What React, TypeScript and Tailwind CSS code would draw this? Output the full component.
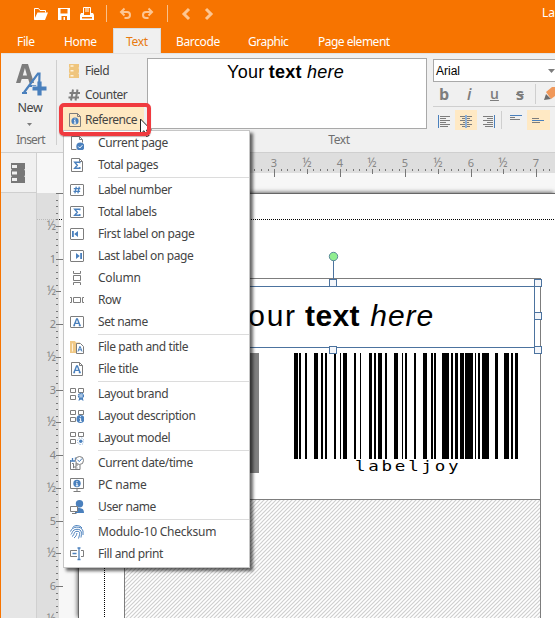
import { Fragment, ReactNode } from "react";

const GRAY = "#7d7d7d";
const BLUE = "#4a80bd";

interface MenuEntry {
    icon: string,
    label: string,
    wide?: boolean,
    last?: boolean
}

const menu: MenuEntry[] = [
    { icon: "currentPage", label: "Current page" },
    { icon: "totalPages", label: "Total pages", last: true },
    { icon: "labelNumber", label: "Label number" },
    { icon: "totalLabels", label: "Total labels" },
    { icon: "first", label: "First label on page" },
    { icon: "lastLabel", label: "Last label on page" },
    { icon: "column", label: "Column", wide: true },
    { icon: "row", label: "Row" },
    { icon: "setName", label: "Set name", last: true },
    { icon: "filePath", label: "File path and title" },
    { icon: "fileTitle", label: "File title", last: true },
    { icon: "brand", label: "Layout brand" },
    { icon: "description", label: "Layout description" },
    { icon: "model", label: "Layout model", last: true },
    { icon: "date", label: "Current date/time" },
    { icon: "pc", label: "PC name", wide: true },
    { icon: "user", label: "User name", last: true },
    { icon: "checksum", label: "Modulo-10 Checksum", wide: true },
    { icon: "fill", label: "Fill and print" },
];

// [x, width] of every bar, relative to the barcode
const bars = [
    [0, 4], [5, 2], [11, 2], [20, 4], [27, 2], [31, 2], [40, 2], [46, 1], [49, 4], [60, 2], [66, 1], [75, 3],
    [80, 2], [84, 4], [91, 2], [100, 4], [108, 1], [111, 2], [120, 2], [129, 4], [137, 2], [140, 2], [148, 7],
    [157, 2], [161, 3], [166, 4], [171, 8], [181, 1], [184, 2], [188, 7], [201, 3], [210, 5], [217, 2], [221, 3],
];

const sheet = <path d="M1.5 .5h8l3 3v10h-11zM9.5 .5v3h3" />;
const card = <rect x=".5" y="1.5" width="13" height="11" rx=".5" />;
const grid = <path d="M.5 1.5h5v4h-5zM8.5 1.5h5v4h-5zM.5 8.5h5v4h-5z" />;
const sigma = <path d="M9.8 5.3V4.2H4.7l2.6 3-2.6 3h5.1V9" stroke={BLUE} strokeWidth="1.4" />;
const letterA = <path d="M4 10.5 6.6 4h.8L10 10.5M5 8.4h4M3.3 10.5h1.8M8.8 10.5h2" stroke={BLUE} strokeWidth="1.4" />;

const icons: Record<string, ReactNode> = {
    currentPage: <>
        <path d="M6.5 13.5h-5V.5h8l3 3v3M9.5 .5v3h3" />
        <circle cx="10.3" cy="10.5" r="4" fill={BLUE} stroke="none" />
        <path d="m8.3 10.5 1.5 1.5 2.6-2.8" stroke="#fff" />
    </>,
    totalPages: <>{sheet}{sigma}</>,
    labelNumber: <>
        {card}
        <path d="M6.3 3.7 4.9 10.3M9.3 3.7 7.9 10.3M3.8 5.7h6.6M3.5 8.3h6.6" stroke={BLUE} strokeWidth="1.3" />
    </>,
    totalLabels: <>{card}{sigma}</>,
    first: <>{card}<path d="M2 4h1.8v6H2zM8 4v6L4.2 7z" fill={BLUE} stroke="none" /></>,
    lastLabel: <>{card}<path d="M10.2 4H12v6h-1.8zM6 4v6l3.8-3z" fill={BLUE} stroke="none" /></>,
    column: <path d="M3.5 0v2.5h7V0M3.5 4.5h7v5h-7zM3.5 14v-2.5h7V14" />,
    row: <path d="M0 4.5h1.5v5H0M3.5 4.5h7v5h-7zM14 4.5h-1.5v5H14" />,
    setName: <>{card}{letterA}</>,
    filePath: <>
        <path d="M0 1h5l1 1.5h4v2H6V13H0z" fill="#f0c987" stroke="none" />
        <path d="M2.5 3.5v8" stroke="#fdf0da" />
        <path d="M6.5 3.5h4l3 3v7h-7z" fill="#fff" />
        <path d="m8 11.5 1.8-5h.4l1.8 5M8.6 9.8h2.8" stroke={BLUE} />
    </>,
    fileTitle: <>{sheet}{letterA}</>,
    brand: <>
        {grid}
        <path d="m9.3 10-.8 4 2.5-1.5 2.5 1.5-.8-4z" fill={BLUE} stroke="none" />
        <circle cx="11" cy="8.8" r="2.5" stroke={BLUE} fill="#a9c4e2" strokeDasharray="1.4 .6" strokeWidth="1.4" />
    </>,
    description: <>
        {grid}
        <circle cx="10.5" cy="10" r="4" fill={BLUE} stroke="none" />
        <path d="M10.6 7.2v1M9.6 9.5h1v2.8M9.4 12.4h2.4" stroke="#fff" />
    </>,
    model: <>
        {grid}
        <circle cx="10.8" cy="10.2" r="3.3" stroke="#88add5" strokeDasharray="1.3 1.3" />
        <circle cx="10.8" cy="10.2" r="1.7" fill={BLUE} stroke="none" />
    </>,
    date: <>
        <path d="M.5 4v9.5H10V9" />
        <path d="M0 5h5M2.5 2v3.5M5.5 1.5v3" stroke={BLUE} strokeWidth="1.3" />
        <path d="M2 7.5h1.5v4.7M5 8h2v2H5v2h2.5" />
        <circle cx="9.5" cy="4.5" r="4" fill="#fff" />
        <path d="m7.5 4 2 1.5 2.5-3" stroke={BLUE} />
    </>,
    pc: <>
        <path d="M.5 .5h13v10H.5zM7 10.5v3M3.5 13.5h7" />
        <circle cx="7" cy="5.5" r="3.7" fill={BLUE} stroke="none" />
        <path d="M7 3v1M6.2 5.2H7v2.5M5.8 7.8h2.5" stroke="#fff" />
    </>,
    user: <>
        <circle cx="9.5" cy="3.7" r="3.7" fill={BLUE} stroke="none" />
        <path d="M5 9c1-1.5 3-1.5 4.500-1S14 8 14 13H5z" fill={BLUE} stroke="none" />
        <path d="M.5 6.5h7v5h-7zM2 13.5h4.5" fill="#fff" />
    </>,
    checksum: <g stroke={BLUE}>
        <path d="M2.5 2.5C5-.2 9.500-.2 12 3M.5 6.5C2 1 11.500.5 13 6v4M.8 9.5C2.5 9 1.5 4.5 7 4.3S11.500 9 11 12.5M2 11.5C5 10 3 6.5 7 6.3S9.500 10 8.500 13.500M4 13c2-1.500 2.500-3 3-5" />
    </g>,
    fill: <>
        <path d="M7 3.500H.5v6H7M11 3.5h2.5v6H11" />
        <path d="M2.5 6.5h4M7.5 1h3M7.5 12.5h3M9 1v11.5" stroke={BLUE} strokeWidth="1.3" />
    </>,
};

function MenuIcon({ name }: { name: string }) {
    return (
        <svg width="14" height="14" viewBox="0 0 14 14" fill="none" stroke={GRAY} className="shrink-0">
            {icons[name]}
        </svg>
    )
}

function ReferenceMenu() {
    return (
        <div className="absolute left-[63px] top-[130px] flex h-[438px] w-[187px] flex-col border border-[#c6c6c6] bg-white py-px shadow-[3px_3px_3px_rgba(0,0,0,0.6)]">
            {menu.map((entry) => (
                <Fragment key={entry.label}>
                    <div className="flex h-[22px] shrink-0 items-center gap-[14px] pl-[6px] text-[12px]">
                        <MenuIcon name={entry.icon} />
                        <span className={entry.wide ? "whitespace-nowrap tracking-[-0.23px]" : "whitespace-nowrap tracking-[-0.39px]"}>{entry.label}</span>
                    </div>
                    {entry.last && <div className="ml-[34px] h-[3px] shrink-0 py-px"><div className="h-px bg-[#dcdcdc]" /></div>}
                </Fragment>
            ))}
        </div>
    )
}

function TitleBar() {
    return (
        <div className="flex h-[28px] items-center overflow-hidden whitespace-nowrap text-white">
            <svg width="220" height="28" viewBox="1 0 220 28" fill="none" className="shrink-0">
                <path d="M34.5 19.5v-11h4l1.5 2h5.5v2" stroke="#fff" />
                <path d="M34 20 37.5 12.5H48L45 20z" fill="#fff" />
                <path d="M58 8h12v12H58zM60.5 9v4.5h7V9zM61.5 16v4h2v-3H65v3h2v-4z" fill="#fff" fillRule="evenodd" />
                <path d="M83.5 15V7.5h7V15" stroke="#fff" />
                <path d="M85 8h4v4h-4z" fill="#ffbd80" />
                <path d="M81 13h2v2h8v-2h2l1 2v5H80v-5zm1 4v1.5h10V17z" fill="#fff" fillRule="evenodd" />
                <path d="M106.5 5v17M167.5 5v17" stroke="#f9c08a" />
                <path d="M124.5 8.5 121 12l3.5 3.5M121 12h6c4 0 4 6 0 6h-2.500M148.5 8.5 152 12l-3.5 3.5M152 12h-6c-4 0-4 6 0 6h2.5" stroke="#fdc692" strokeWidth="2" />
                <path d="m189 9-5 5 5 5M206 9l5 5-5 5" stroke="#fdc692" strokeWidth="3" />
            </svg>
            <span className="ml-[321px] pb-[2px] text-[12px]">La</span>
        </div>
    )
}

function Tabs() {
    return (
        <div className="flex h-[25px] whitespace-nowrap pl-[2px] text-[12px] leading-[27px] tracking-[-0.35px] text-white">
            <div className="w-[47px] pl-[14px]">File</div>
            <div className="w-[63px] pl-[14px]">Home</div>
            <div className="w-[48px] border border-b-0 border-[#d8dde0] bg-[#f0f0f0] pl-[12px] leading-[25px] text-[#e87a10]">Text</div>
            <div className="w-[73px] pl-[15px]">Barcode</div>
            <div className="w-[70px] pl-[14px] tracking-[-0.5px]">Graphic</div>
            <div className="pl-[14px] tracking-[-0.5px]">Page element</div>
        </div>
    )
}

function FontTools() {
    return (
        <div className="ml-[6px] mt-[5px] flex w-[122px] shrink-0 flex-col">
            <div className="flex h-[23px] items-center justify-between border border-r-0 border-[#a9a9a9] bg-white pl-[2px] font-['Liberation_Sans',sans-serif] text-[12px] text-black">
                Arial
                <svg width="7" height="4" viewBox="0 0 7 4"><path d="M0 0h7L3.5 4z" fill={GRAY} /></svg>
            </div>
            <div className="flex h-[25px] items-center border-b border-[#cfcfcf] font-['Open_Sans',sans-serif] leading-none text-[#7d7d7d]">
                <span className="w-[26px] pl-[6px] text-[16px] font-bold">b</span>
                <span className="w-[26px] pl-[8px] text-[16px] font-semibold italic">i</span>
                <span className="w-[24px] pl-[5px] text-[14px] font-semibold underline">u</span>
                <span className="w-[26px] pl-[7px] text-[16px] font-bold line-through">s</span>
                <span className="h-[20px] w-px bg-[#cfcfcf]" />
                <svg width="19" height="14" viewBox="0 0 19 14">
                    <path d="m10 5 6-5h3v9l-4 3z" fill="#f0985a" />
                    <path d="m8 13 2-6 5 5z" fill="#6d6d6d" />
                </svg>
            </div>
            <div className="mt-[3px] flex h-[20px] items-center">
                <svg width="22" height="20" viewBox="0 0 22 20" fill="none" stroke={GRAY}>
                    <path d="M7 6.5h10M7 8.5h6M7 10.5h10M7 12.5h6M7 14.5h10M7 16.5h8" />
                    <path d="M5.5 5v13" stroke={BLUE} />
                </svg>
                <svg width="22" height="20" viewBox="0 0 22 20" fill="none" stroke={GRAY} className="bg-[#ffe9c4]">
                    <path d="M5 6.5h12M7 8.5h8M5 10.5h12M8 12.5h6M5 14.5h12M7 16.5h8" />
                    <path d="M11 5v13" stroke="#8fb2da" strokeWidth="2" />
                </svg>
                <svg width="24" height="20" viewBox="0 0 24 20" fill="none" stroke={GRAY}>
                    <path d="M6 6.5h10M10 8.5h6M6 10.5h10M10 12.5h6M6 14.5h10M8 16.5h8" />
                    <path d="M17.5 5v13" stroke={BLUE} />
                </svg>
                <span className="h-[18px] w-px bg-[#cfcfcf]" />
                <svg width="25" height="20" viewBox="0 0 25 20" fill="none" stroke={GRAY}>
                    <path d="M8 5.5h12" stroke={BLUE} /><path d="M8 7.5h5M8 9.5h10" />
                </svg>
                <svg width="23" height="20" viewBox="0 0 23 20" fill="none" stroke={GRAY} className="bg-[#ffe9c4]">
                    <path d="M5 8.5h7M5 12.5h8" /><path d="M5 10.5h12" stroke={BLUE} />
                </svg>
            </div>
        </div>
    )
}

function Ribbon() {
    return (
        <div className="flex h-[100px] overflow-hidden border-y border-t-[#e2e2e2] border-b-[#cfcfcf] bg-[#f0f0f0]">
            <div className="flex w-[55px] shrink-0 flex-col items-center pl-[4px] text-[12px] leading-[14px]">
                <svg width="32" height="33" viewBox="0 0 32 33" className="mt-[9px]">
                    <path d="M1 20 7 1h6l6 19h-4.5l-1.3-4H6.7l-1.3 4zM7.8 12.500h4.200L9.900 5z" fill={GRAY} />
                    <path d="M9 29.5 23 10.5h1.5l-.5 19M14.5 23H24M7 30h5" fill="none" stroke={BLUE} strokeWidth="2.2" />
                    <path d="M24.500 19v15M17 26h14" stroke="#f0f0f0" strokeWidth="6.5" />
                    <path d="M24.5 18.5v14M17.5 25.5h14" stroke={BLUE} strokeWidth="4.2" />
                </svg>
                <span className="mt-[5px] pr-px text-[12.5px] tracking-[-0.3px]">New</span>
                <svg width="5" height="3" viewBox="0 0 5 3" className="mt-[8px] mr-[2px]"><path d="M0 0h5L2.5 3z" fill={GRAY} /></svg>
                <span className="mt-[7px] tracking-[-0.8px] text-[#6e6e6e]">Insert</span>
            </div>
            <div className="mt-[6px] h-[85px] w-px shrink-0 bg-[#cfcfcf]" />
            <div className="flex w-[90px] shrink-0 flex-col pl-[5px] pt-[5px] text-[12px] tracking-[-0.5px]">
                <div className="flex h-[24px] items-center gap-[3px] pl-[6px]">
                    <svg width="14" height="14" viewBox="0 0 14 14">
                        <path d="M1 0h10v3.5L10 4l1 .6v4l-1 .6 1 .6V14H1V9.7l1-.5-1-.6v-4L2 4l-1-.5z" fill="#efc57d" />
                        <path d="M2.5 2h3M2.5 6.8h3M2.5 11.7h3" stroke="#fff2da" strokeWidth="1.6" />
                    </svg>
                    Field
                </div>
                <div className="flex h-[24px] items-center gap-[3px] pl-[6px]">
                    <svg width="14" height="14" viewBox="0 0 14 14" stroke={GRAY} strokeWidth="2">
                        <path d="M5 1.500 3 12.500M9.500 1.500 7.500 12.500M1.500 5h10.500M.5 9.500h10.500" />
                    </svg>
                    Counter
                </div>
                <div className="flex h-[26px] w-[82px] items-center gap-[3px] bg-[#fee8c1] pl-[6px]">
                    <svg width="14" height="14" viewBox="0 0 14 14" fill="none" stroke={GRAY}>
                        {sheet}
                        <circle cx="7" cy="8" r="3.6" fill={BLUE} stroke="none" />
                        <path d="M7 5.5v1M6.2 7.5H7V10M5.8 10.2h2.4" stroke="#fff" />
                    </svg>
                    Reference
                </div>
            </div>
            <div className="flex w-[280px] shrink-0 flex-col items-center pt-[4px]">
                <div className="h-[71px] w-[280px] border border-[#a9a9a9] bg-white pt-[3px] text-center font-['Liberation_Sans',sans-serif] text-[18px] leading-[21px] tracking-[0.25px] text-black">
                    <span className="mr-[3px]">Your <b className="-ml-px">text</b> <i>here</i></span>
                </div>
                <span className="mt-[4px] pl-[104px] text-[12px] leading-[14px] tracking-[-0.4px] text-[#6e6e6e]">Text</span>
            </div>
            <FontTools />
        </div>
    )
}

// one unit is 65.5px, divided in ten
const ticks = Array.from({ length: 73 }, (_, i) => i);

function tickText(i: number) {
    return i % 10 === 0 ? String(i / 10) : "½";
}

function TopRuler() {
    return (
        <svg width="496" height="40" viewBox="59 153 496 40" className="block shrink-0">
            <rect x="78" y="153" width="477" height="20" fill="#dedede" />
            {ticks.map((i) => {
                const x = Math.round(77.6 + i * 6.55);
                const [y, h] = i % 10 === 0 ? [172, 8] : i % 5 === 0 ? [172, 5] : [172, 2];
                return (
                    <Fragment key={i}>
                        <rect x={x} y={i % 5 === 0 ? y - 3 : y - 3} width="1" height={h} fill="#777" />
                        {i >= 30 && i % 5 === 0 && <text x={x} y="167" textAnchor="middle" fontSize={i % 10 ? 12 : 11} fill="#858585">{tickText(i)}</text>}
                    </Fragment>
                )
            })}
        </svg>
    )
}

function SideRuler() {
    return (
        <svg width="41" height="425" viewBox="37 193 41 425" className="block shrink-0">
            <rect x="37" y="193" width="22" height="425" fill="#dedede" />
            <path d="M37 219.5h22" stroke="#bbb" strokeDasharray="1 1" />
            <path d="M59 219.5h19" stroke="#000" strokeDasharray="1 1" />
            {ticks.map((i) => {
                const y = Math.round(193 + i * 6.55);
                const [x, w] = i % 10 === 0 ? [56, 7] : i % 5 === 0 ? [56, 5] : [56, 2];
                return (
                    <Fragment key={i}>
                        <rect x={x} y={y} width={w} height="1" fill="#777" />
                        {i > 0 && i <= 65 && i % 5 === 0 && <text x="56" y={y + 4} textAnchor="end" fontSize={i % 10 ? 12 : 11} fill="#858585">{tickText(i)}</text>}
                    </Fragment>
                )
            })}
        </svg>
    )
}

// page objects, in page coordinates (page starts at 78,193)
function Page() {
    return (
        <div className="relative h-[425px] w-[477px] shrink-0 overflow-visible border-l border-t border-[#666] bg-white shadow-[-1px_-1px_4px_rgba(0,0,0,0.55)]">
            <svg width="476" height="424" viewBox="79 194 476 424" className="block" fill="none">
                <defs>
                    <pattern id="hatch" width="4" height="4" patternUnits="userSpaceOnUse">
                        <path d="M-1 1 1-1M0 4 4 0M3 5 5 3" stroke="#cfcfcf" strokeWidth="1.2" />
                    </pattern>
                </defs>
                <path d="M79 219.5h476M104.5 194v424" stroke="#000" strokeDasharray="1 1" />
                <rect x="124.5" y="499.5" width="416" height="140" fill="url(#hatch)" stroke="#7d7d7d" />
                <rect x="124.5" y="278.5" width="416" height="221" stroke="#7d7d7d" fill="#fff" />
                <rect x="140" y="353" width="119" height="120" fill="#808080" />
                <g fill="#000">
                    {bars.map(([x, w]) => <rect key={x} x={294 + x} y="353" width={w} height="106" />)}
                </g>
                <path d="M333.5 260v19M100 286.5h434.5v61H100" stroke="#4c739f" />
                <circle cx="333.5" cy="256.5" r="4.2" fill="#90ee90" stroke="#5a8a9a" />
                <g fill="#f4f6fa" stroke="#4c739f">
                    <rect x="329.5" y="279.5" width="7" height="7" />
                    <rect x="534.5" y="279.5" width="7" height="7" />
                    <rect x="534.5" y="312.5" width="7" height="7" />
                    <rect x="534.5" y="346.5" width="7" height="7" />
                    <rect x="329.5" y="346.5" width="7" height="7" />
                </g>
            </svg>
            <div className="absolute right-[121px] top-[105px] whitespace-nowrap font-['Liberation_Sans',sans-serif] text-[30px] leading-[34px] text-black [word-spacing:-2px]">
                <span className="tracking-[1.8px]">Your </span><b className="mr-[4px] tracking-[0.4px]">text</b> <i className="tracking-[0.9px]">here</i>
            </div>
            <div className="absolute left-[276px] top-[263px] origin-left scale-x-125 font-['DejaVu_Sans_Mono',monospace] text-[14px] leading-[18px] tracking-[2.2px] text-black">labeljoy</div>
        </div>
    )
}

function Workspace() {
    return (
        <div className="flex h-[465px] bg-[#f7f7f7]">
            <div className="w-[36px] shrink-0 border-r border-[#d0d0d0] bg-[#e6e6e6]">
                <div className="flex h-[40px] items-center border-b border-[#cfcfcf] bg-[#f0f0f0] pl-[9px]">
                    <svg width="16" height="20" viewBox="0 0 16 20">
                        <path d="M1 0h14v6l-1 .8 1 .7v5l-1 .8 1 .7v6H1v-6l1-.7-1-.8v-5l1-.7L1 6z" fill="#777" />
                        <path d="M2 2h5v3H2zM2 8.5h5v3H2zM2 15h5v3H2z" fill="#f0f0f0" />
                    </svg>
                </div>
            </div>
            <div className="flex min-w-0 flex-1 flex-col overflow-hidden">
                <div className="pl-[22px]"><TopRuler /></div>
                <div className="flex">
                    <SideRuler />
                    <Page />
                </div>
            </div>
        </div>
    )
}

export default function App() {
    return (
        <div className="relative h-[618px] w-[555px] overflow-hidden border-l border-[#f77400] bg-[#f77400] font-['Noto_Sans',sans-serif] text-[#444]">
            <TitleBar />
            <Tabs />
            <Ribbon />
            <Workspace />
            <div className="absolute -left-px top-0">
                <ReferenceMenu />
                <svg width="14" height="20" viewBox="0 0 14 20" className="absolute left-[140px] top-[118px]">
                    <path d="M.5 1v15L4 12.700 6.500 18.500l2.500-1-2.500-5.500h4.800z" fill="#fff" stroke="#222" />
                </svg>
                <div className="absolute left-[59px] top-[103px] h-[33px] w-[92px] rounded-[5px] border-[4.5px] border-[#f03a3f] shadow-[0_1px_1px_rgba(90,30,30,0.35)]" />
            </div>
        </div>
    )
}
